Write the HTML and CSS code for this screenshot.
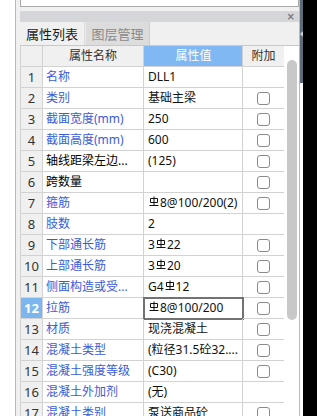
FILE: index.html
```html
<!DOCTYPE html>
<html lang="zh-CN">
<head>
<meta charset="utf-8">
<title>属性列表</title>
<link rel="stylesheet" href="styles.css">
</head>
<body>
<div class="screen">
  <div class="left-strip"></div>
  <div class="panel">
    <div class="topbox"></div>
    <div class="titlebar"><span class="close">×</span></div>
    <div class="tabs">
      <div class="tab active">属性列表</div>
      <div class="tab">图层管理</div>
    </div>
    <div class="body">
      <div class="grid">
        <div class="row head">
          <div class="c idx"></div>
          <div class="c name center">属性名称</div>
          <div class="c val hl">属性值</div>
          <div class="c ext center">附加</div>
        </div>
        <div class="row"><div class="c idx">1</div><div class="c name blue">名称</div><div class="c val">DLL1</div><div class="c ext"></div></div>
        <div class="row"><div class="c idx">2</div><div class="c name blue">类别</div><div class="c val">基础主梁</div><div class="c ext"><span class="cb"></span></div></div>
        <div class="row"><div class="c idx">3</div><div class="c name blue">截面宽度(mm)</div><div class="c val">250</div><div class="c ext"><span class="cb"></span></div></div>
        <div class="row"><div class="c idx">4</div><div class="c name blue">截面高度(mm)</div><div class="c val">600</div><div class="c ext"><span class="cb"></span></div></div>
        <div class="row"><div class="c idx">5</div><div class="c name">轴线距梁左边...</div><div class="c val">(125)</div><div class="c ext"><span class="cb"></span></div></div>
        <div class="row"><div class="c idx">6</div><div class="c name">跨数量</div><div class="c val"></div><div class="c ext"><span class="cb"></span></div></div>
        <div class="row"><div class="c idx">7</div><div class="c name blue">箍筋</div><div class="c val"><svg class="rb" viewBox="0 0 10 10"><path d="M5 0.5V9.5M1.5 2.5H8.5V6.5H1.5ZM0.5 9.5H9.5"/></svg>8@100/200(2)</div><div class="c ext"><span class="cb"></span></div></div>
        <div class="row"><div class="c idx">8</div><div class="c name blue">肢数</div><div class="c val">2</div><div class="c ext"></div></div>
        <div class="row"><div class="c idx">9</div><div class="c name blue">下部通长筋</div><div class="c val">3<svg class="rb" viewBox="0 0 10 10"><path d="M5 0.5V9.5M1.5 2.5H8.5V6.5H1.5ZM0.5 9.5H9.5"/></svg>22</div><div class="c ext"><span class="cb"></span></div></div>
        <div class="row"><div class="c idx">10</div><div class="c name blue">上部通长筋</div><div class="c val">3<svg class="rb" viewBox="0 0 10 10"><path d="M5 0.5V9.5M1.5 2.5H8.5V6.5H1.5ZM0.5 9.5H9.5"/></svg>20</div><div class="c ext"><span class="cb"></span></div></div>
        <div class="row"><div class="c idx">11</div><div class="c name blue">侧面构造或受...</div><div class="c val">G4<svg class="rb" viewBox="0 0 10 10"><path d="M5 0.5V9.5M1.5 2.5H8.5V6.5H1.5ZM0.5 9.5H9.5"/></svg>12</div><div class="c ext"><span class="cb"></span></div></div>
        <div class="row"><div class="c idx sel">12</div><div class="c name blue">拉筋</div><div class="c val edit"><svg class="rb" viewBox="0 0 10 10"><path d="M5 0.5V9.5M1.5 2.5H8.5V6.5H1.5ZM0.5 9.5H9.5"/></svg>8@100/200</div><div class="c ext"><span class="cb"></span></div></div>
        <div class="row"><div class="c idx">13</div><div class="c name blue">材质</div><div class="c val">现浇混凝土</div><div class="c ext"><span class="cb"></span></div></div>
        <div class="row"><div class="c idx">14</div><div class="c name blue">混凝土类型</div><div class="c val">(粒径31.5砼32....</div><div class="c ext"><span class="cb"></span></div></div>
        <div class="row"><div class="c idx">15</div><div class="c name blue">混凝土强度等级</div><div class="c val">(C30)</div><div class="c ext"><span class="cb"></span></div></div>
        <div class="row"><div class="c idx">16</div><div class="c name blue">混凝土外加剂</div><div class="c val">(无)</div><div class="c ext"></div></div>
        <div class="row"><div class="c idx">17</div><div class="c name blue">混凝土类别</div><div class="c val">泵送商品砼</div><div class="c ext"><span class="cb"></span></div></div>
      </div>
      <div class="scroll"><div class="thumb"></div></div>
    </div>
  </div>
  <div class="edge"><div class="edge-top"><span class="handle"></span></div></div>
  <div class="black"></div>
</div>
</body>
</html>
```
FILE: styles.css
```css
* { box-sizing: border-box; }
html, body { margin: 0; padding: 0; }
body {
  width: 317px;
  height: 416px;
  overflow: hidden;
  background: #fff;
  font-family: "Noto Sans", "Noto Sans CJK SC", sans-serif;
  font-size: 12px;
  color: #000;
}
.screen {
  display: flex;
  width: 317px;
  height: 416px;
}
.left-strip {
  width: 16px;
  flex: none;
  background: #fff;
  border-right: 1px solid #b8b8b8;
}
.panel {
  width: 284px;
  flex: none;
  background: #f0f0f0;
  border-right: 1px solid #b8b8b8;
  padding-left: 4px;
  display: flex;
  flex-direction: column;
  overflow: hidden;
}
.topbox {
  height: 7px;
  flex: none;
  background: #fff;
  border: 1px solid #a9a9a9;
  border-top: none;
}
.titlebar {
  height: 11px;
  margin-top: 4px;
  flex: none;
  background: #d5d6da;
  display: flex;
  justify-content: flex-end;
  align-items: center;
  padding-right: 4px;
}
.close {
  font-family: "DejaVu Sans", sans-serif;
  font-size: 10px;
  line-height: 10px;
  color: #7a7a7a;
  font-weight: bold;
}
.tabs {
  height: 24px;
  flex: none;
  display: flex;
  border-bottom: 1px solid #c8c8c8;
  background: #f0f0f0;
}
.tab {
  width: 65px;
  display: flex;
  align-items: center;
  justify-content: center;
  color: #8a8a8a;
  background: #dcdcdc;
  border-left: 1px solid #e8e8e8;
  border-right: 1px solid #cfcfcf;
  font-size: 13px;
}
.tab.active {
  background: #f0f0f0;
  color: #1a1a1a;
  border-left: none;
  border-right: 1px solid #dddddd;
}
.body {
  flex: 1;
  display: flex;
  background: #fff;
}
.grid {
  width: 264px;
  flex: none;
  display: flex;
  flex-direction: column;
}
.row {
  display: grid;
  grid-template-columns: 22px 101px 99px 42px;
  height: 21px;
  flex: none;
  border-left: 1px solid #d2d2d2;
}
.c {
  border-right: 1px solid #d2d2d2;
  border-bottom: 1px solid #d2d2d2;
  display: flex;
  align-items: center;
  padding: 0 3px;
  white-space: nowrap;
  overflow: hidden;
  line-height: 20px;
}
.idx {
  background: #f0f0f0;
  justify-content: center;
  color: #333;
  font-size: 13px;
  padding: 0;
}
.idx.sel {
  background: #7db6ef;
  color: #fff;
  font-weight: bold;
}
.head .c {
  background: #f0f0f0;
  color: #333;
}
.center { justify-content: center; }
.head .hl {
  background: #80b8f3;
  color: #fff;
  justify-content: center;
}
.name { padding-left: 3px; }
.blue { color: #3a5cd9; }
.val { padding-left: 4px; color: #111; }
.val.edit {
  outline: 2px solid #727272;
  outline-offset: -1px;
}
.ext { justify-content: center; padding: 0; }
.cb {
  width: 13px;
  height: 13px;
  border: 1px solid #8a8a8a;
  border-radius: 3px;
  background: #fff;
}
.rb {
  width: 10px;
  height: 10px;
  flex: none;
  align-self: flex-start;
  margin-top: 3px;
  margin-left: 1px;
  margin-right: 1px;
  fill: none;
  stroke: #111;
  stroke-width: 1;
}
.scroll {
  flex: 1;
  padding: 14px 2px 0 3px;
  background: #fff;
}
.thumb {
  width: 10px;
  height: 260px;
  border-radius: 5px;
  background: #c8c8c8;
}
.edge {
  width: 3px;
  flex: none;
  background: #fff;
}
.edge-top {
  height: 83px;
  background: #5f6b78;
  padding-top: 31px;
}
.handle {
  display: block;
  width: 0;
  height: 0;
  border-top: 3px solid transparent;
  border-bottom: 3px solid transparent;
  border-right: 3px solid #c8ced4;
}
.black {
  flex: 1;
  background: #000;
}
```
